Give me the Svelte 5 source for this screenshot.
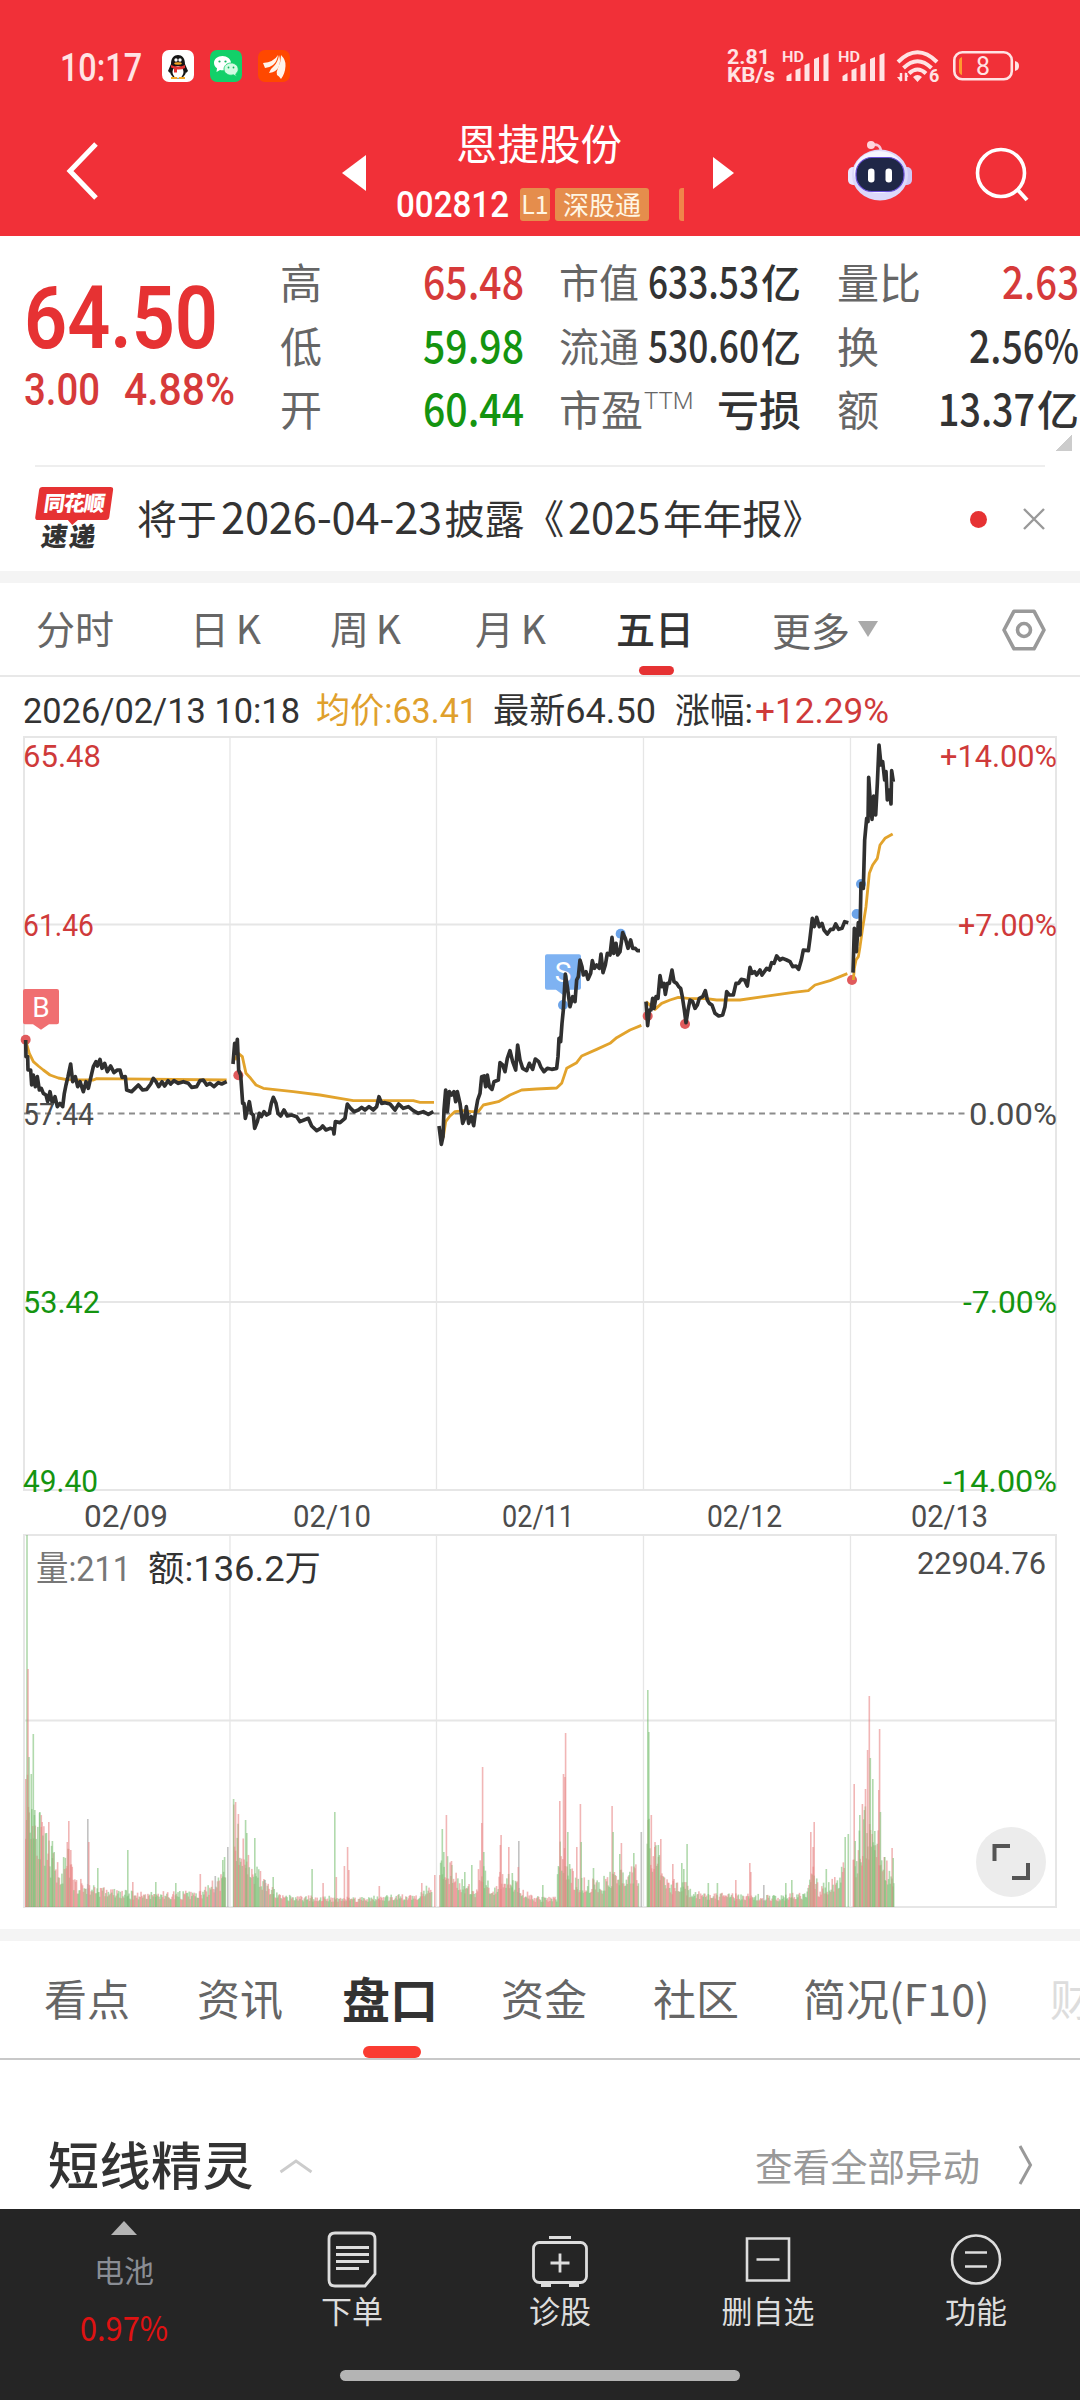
<script>
  const quotes = [
    [
      { label: '高', value: '65.48', w: 101, tone: 'up' },
      { label: '低', value: '59.98', w: 101, tone: 'down' },
      { label: '开', value: '60.44', w: 101, tone: 'down' }
    ],
    [
      { label: '市值', value: '633.53', w: 111, unit: '亿', small: true },
      { label: '流通', value: '530.60', w: 111, unit: '亿', small: true },
      { label: '市盈', sup: 'TTM', unit: '亏损' }
    ],
    [
      { label: '量比', value: '2.63', w: 77, tone: 'up' },
      { label: '换', value: '2.56%', w: 110 },
      { label: '额', value: '13.37', w: 97, unit: '亿' }
    ]
  ];
  const periods = ['分时', '日 K', '周 K', '月 K', '五日'];
  const sections = ['看点', '资讯', '盘口', '资金', '社区', '简况(F10)', '财'];

  // Grid geometry shared by the price and volume panels
  const gridX = [230, 436.5, 643.5, 850.5];
  const dates = [
    ['02/09', 84, 84], ['02/10', 293, 78], ['02/11', 502, 72], ['02/12', 707, 75], ['02/13', 911, 77]
  ];
  const scale = [
    ['65.48', '+14.00%', 767, 78, 117, 'up'],
    ['61.46', '+7.00%', 936, 71, 99, 'up'],
    ['57.44', '0.00%', 1125, 71, 88, 'flat'],
    ['53.42', '-7.00%', 1313, 77, 94, 'down'],
    ['49.40', '-14.00%', 1492, 75, 114, 'down']
  ];

  // Intraday traces: each panel carries its own origin, drawn at three units per pixel
  const traces = [
    {
      x: 0, y: 960,
      avg: ['78,245 88,280 100,305 115,318 130,330 150,345 175,354 200,359 280,360 290,356 680,360',
        '705,300 715,280 727,290 738,340 752,355 768,375 790,385 880,395 960,405 1020,415 1060,422 1240,422 1260,427 1302,427'],
      price: ['77,240 78,290 83,290 84,330 92,330 95,375 100,345 106,380 112,350 118,390 124,385 130,400 138,405 143,425 150,395 157,430 165,410 172,440 180,430 188,440 193,400 198,375 204,350 212,312 218,365 226,350 233,380 240,365 250,395 258,365 265,385 273,350 280,320 288,305 292,318 300,298 306,325 314,310 322,335 332,318 342,338 352,330 360,330 366,352 376,350 380,390 395,395 405,385 415,375 428,390 440,388 452,372 460,355 468,365 476,380 486,365 494,378 504,362 512,372 522,362 535,370 550,365 565,370 575,382 590,380 600,362 610,360 620,375 630,370 642,380 655,368 665,372 680,365',
        '699,312 704,250 708,280 712,238 716,330 722,345 728,430 732,430 736,475 742,450 748,425 754,460 760,465 764,505 772,485 778,460 784,470 792,455 800,465 808,460 814,430 820,412 828,430 834,460 842,468 852,450 862,468 875,465 890,470 900,485 912,480 925,475 935,498 950,512 962,505 968,498 978,510 990,505 1000,508 1002,522 1006,485 1020,488 1035,475 1042,432 1052,445 1062,455 1075,450 1085,442 1095,450 1107,440 1120,450 1130,440 1137,410 1145,430 1155,428 1170,432 1185,450 1196,432 1210,445 1225,440 1240,452 1255,460 1270,455 1285,463 1300,455'],
      dots: [[77, 239, 'r'], [715, 346, 'r']]
    },
    {
      x: 430, y: 880,
      avg: ['27,745 40,770 47,725 60,708 75,695 100,692 125,695 145,695 160,675 205,665 240,645 275,630 320,627 380,624 395,610 410,565 440,548 455,528 500,508 540,490 560,473 600,450 634,436',
        '648,365 675,388 695,370 720,360 745,352 780,356 830,356 860,360 930,360 1000,350 1090,337 1135,332 1155,315 1200,302 1230,290 1252,281'],
      price: ['27,738 34,793 39,770 42,690 47,630 52,695 58,635 65,645 72,635 77,665 82,635 90,670 98,730 104,715 109,680 116,730 124,710 131,737 136,700 143,660 150,640 155,590 162,588 167,620 172,585 178,620 186,628 192,605 205,600 210,548 218,555 225,575 232,535 240,512 248,545 257,570 263,495 270,540 278,565 290,572 298,550 308,568 316,537 326,545 332,560 342,575 352,565 365,568 380,565 384,530 387,475 392,485 396,430 400,390 406,282 412,320 420,380 428,350 435,365 440,300 445,290 450,240 456,260 460,285 468,275 474,298 482,280 487,242 493,265 500,255 508,265 513,222 519,278 526,255 532,220 540,225 546,172 551,220 558,190 563,225 570,215 578,158 586,175 594,205 602,180 608,205 616,205 622,212 630,212',
        '648,365 653,437 658,390 663,390 668,355 672,385 678,350 684,355 690,287 696,320 702,310 706,343 712,310 718,310 726,270 732,305 740,310 746,320 752,325 757,350 763,390 768,428 774,390 780,360 788,365 795,385 802,375 808,355 818,350 826,332 832,360 838,370 846,375 855,400 866,408 878,405 885,380 890,335 898,345 910,345 918,310 926,310 934,298 944,300 952,318 960,262 966,280 974,275 980,285 990,270 996,285 1010,265 1018,270 1025,248 1032,250 1040,228 1050,240 1058,235 1070,240 1080,245 1088,260 1098,258 1106,268 1114,240 1120,210 1135,212 1140,175 1147,115 1153,140 1160,112 1168,140 1176,130 1182,150 1192,162 1202,148 1210,148 1217,132 1226,148 1236,145 1244,125 1255,128'],
      dots: [[399, 375, 'b'], [572, 161, 'b'], [653, 408, 'r'], [765, 432, 'r'], [1266, 300, 'r'], [1280, 102, 'b'], [1293, 12, 'b']]
    },
    {
      x: 780, y: 730,
      avg: ['220,750 223,715 228,690 235,680 240,650 247,600 258,530 263,480 268,430 278,405 292,385 300,345 315,325 338,312'],
      price: ['219,728 223,595 229,665 235,578 240,615 243,460 250,475 254,330 260,265 264,275 266,142 270,200 276,268 281,198 287,255 292,160 297,45 303,105 308,95 314,150 318,125 322,210 328,180 333,222 335,122 340,155'],
      dots: []
    }
  ];

  // Volume: an envelope per session plus single-minute spikes [x, height, colour]
  const sessions = [
    { env: [[25, 110], [33, 92], [45, 55], [60, 32], [68, 45], [74, 22], [105, 15], [130, 12], [200, 12], [215, 22], [225, 28]],
      spikes: [[25, 128, 'r'], [26.2, 372, 'g'], [27.2, 238, 'r'], [28.2, 150, 'g'], [30.5, 133, 'g'], [32.5, 173, 'g'], [34, 97, 'g'], [39, 95, 'g'], [40.5, 80, 'r'], [48, 85, 'r'], [51.6, 66, 'g'], [66.5, 65, 'r'], [68, 86, 'r'], [70, 57, 'r'], [87, 88, 'k'], [88, 65, 'r'], [97, 39, 'g'], [127, 57, 'g'], [132, 25, 'r'], [155, 25, 'g'], [175, 24, 'g'], [199.5, 33, 'r'], [214.5, 31, 'k'], [222, 47, 'g'], [223.8, 50, 'g'], [227, 60, 'k']] },
    { env: [[233, 80], [240, 55], [247, 45], [258, 30], [268, 18], [280, 9], [360, 8], [415, 10], [431, 22]],
      spikes: [[232.8, 108, 'g'], [234.8, 105, 'r'], [237.6, 93, 'r'], [244.8, 87, 'g'], [246, 74, 'g'], [254, 69, 'g'], [264, 27, 'k'], [272.4, 30, 'g'], [311.3, 38, 'g'], [322.3, 24, 'r'], [334, 95, 'g'], [335.5, 30, 'r'], [343.6, 41, 'r'], [346.8, 60, 'r'], [348, 37, 'r'], [378.5, 21, 'r'], [421, 24, 'r'], [434, 32, 'r']] },
    { env: [[439, 45], [450, 34], [462, 22], [474, 12], [480, 40], [490, 14], [503, 32], [510, 24], [525, 12], [535, 8], [556, 8], [558, 55], [568, 40], [575, 22], [590, 22], [600, 20], [612, 30], [638, 32]],
      spikes: [[441.5, 78, 'g'], [443, 55, 'g'], [445.6, 92, 'r'], [450.7, 46, 'r'], [464, 35, 'g'], [471, 42, 'g'], [481, 84, 'r'], [481.8, 140, 'r'], [483, 55, 'g'], [499.6, 62, 'r'], [500.3, 72, 'r'], [508, 60, 'r'], [511.5, 34, 'g'], [518, 66, 'k'], [517.5, 40, 'r'], [542, 22, 'g'], [559, 106, 'r'], [562.7, 133, 'r'], [564.8, 174, 'r'], [564.2, 130, 'r'], [567, 75, 'g'], [576, 60, 'r'], [579.6, 103, 'r'], [580.4, 65, 'g'], [592.7, 39, 'g'], [611.3, 101, 'r'], [612.3, 75, 'g'], [619, 53, 'g'], [620.6, 64, 'r'], [633, 54, 'g'], [640.5, 75, 'k']] },
    { env: [[646.5, 100], [650, 58], [662, 32], [668, 18], [680, 25], [690, 14], [700, 11], [780, 9], [806, 12], [811, 38], [818, 16], [835, 24], [844, 35]],
      spikes: [[647, 217, 'g'], [648, 175, 'g'], [650.5, 92, 'r'], [654, 60, 'r'], [657.5, 62, 'g'], [660, 68, 'r'], [672, 43, 'r'], [681, 44, 'g'], [683, 38, 'g'], [686.3, 63, 'g'], [707.5, 24, 'g'], [716.6, 24, 'g'], [735, 27, 'r'], [749, 44, 'r'], [750, 35, 'r'], [763, 22, 'k'], [785, 24, 'g'], [791, 27, 'g'], [810, 75, 'r'], [812.3, 60, 'r'], [813.4, 85, 'r'], [825.5, 38, 'g'], [844.4, 70, 'g'], [847.5, 73, 'g']] },
    { env: [[852.5, 40], [858, 55], [866, 78], [872, 52], [878, 62], [882, 38], [893, 32]],
      spikes: [[853.4, 123, 'r'], [854.4, 66, 'g'], [859, 92, 'g'], [861.6, 103, 'r'], [864.7, 118, 'r'], [866.8, 157, 'r'], [868.5, 211, 'r'], [869.5, 149, 'g'], [872, 128, 'g'], [874, 76, 'g'], [878, 117, 'r'], [878.8, 178, 'r'], [879.6, 95, 'g'], [884, 50, 'g'], [891.3, 59, 'r'], [892.4, 49, 'g']] }
  ];
  let seed = 11;
  const rand = () => (seed = (seed * 16807) % 2147483647) / 2147483647;
  function volumeBars() {
    const bars = [];
    for (const { env, spikes } of sessions) {
      const end = env[env.length - 1][0];
      let i = 0;
      for (let x = env[0][0]; x <= end; x += 0.86) {
        while (i < env.length - 2 && x > env[i + 1][0]) i++;
        const [[x0, h0], [x1, h1]] = [env[i], env[i + 1]];
        const h = (h0 + ((h1 - h0) * (x - x0)) / (x1 - x0)) * (0.62 + 0.75 * rand() ** 1.2);
        bars.push([x, h, rand() < 0.5 ? 'r' : 'g']);
      }
      bars.push(...spikes);
    }
    return bars;
  }
  const bars = volumeBars();
</script>

{#snippet num(text, w, size, weight = 500)}
  <svg class="num" width={w} height={size * 0.711} aria-label={text}>
    <text x="0" y={size * 0.711} font-size={size} font-weight={weight} textLength={w} lengthAdjust="spacingAndGlyphs">{text}</text>
  </svg>
{/snippet}

{#snippet signal()}
  <svg class="signal" width="48" height="34" viewBox="0 0 48 34">
    <text x="0" y="14" font-size="15" font-weight="600" textLength="22" lengthAdjust="spacingAndGlyphs">HD</text>
    <path d="M4.500 33v-5l5-3v8zM13.500 33V22l5-2v13zM22.500 33V17l5-2v18zM32 33V11l5-2v24zM41.500 33V7l5-2v28z" />
  </svg>
{/snippet}

<div class="app">
  <header>
    <div class="status">
      <div class="time">{@render num('10:17', 82, 39, 500)}</div>
      <svg class="apps" width="128" height="32" viewBox="0 0 128 32">
        <rect width="32" height="32" rx="7" fill="#fff" />
        <path d="M9 14c0-6 3-9 7-9s7 3 7 9l3 7-2 2-3-4H11l-3 4-2-2z" fill="#151515" />
        <ellipse cx="16" cy="21.500" rx="8" ry="7" fill="#151515" />
        <ellipse cx="16" cy="22" rx="5.500" ry="6" fill="#fff" />
        <path d="M9 15q7 3 14 0v3q-4 2-8 1.500v3h-3v-4l-3-1z" fill="#e23232" />
        <circle cx="14" cy="10" r="1.700" fill="#fff" /><circle cx="18" cy="10" r="1.700" fill="#fff" />
        <ellipse cx="16" cy="13.500" rx="3.800" ry="1.200" fill="#f5a623" />
        <path d="M9 28h6M17 28h6" stroke="#f5a623" stroke-width="2" />
        <rect x="48" width="32" height="32" rx="7" fill="#12d069" />
        <path d="M60.500 6c-5 0-8.500 3-8.500 7 0 2.300 1.200 4 3 5.300L54.500 22l3.500-2c4 1 11-.5 11-7 0-4-4-7-8.500-7z" fill="#fff" />
        <path d="M69 13c-4 0-7 2.700-7 6s3 6.200 7 6.200l2.500-.4 3 1.700-.8-2.600c1.500-1 2.500-2.800 2.500-4.700 0-3.500-3.200-6.200-7.200-6.200z" fill="#d4fbe3" stroke="#12d069" stroke-width=".8" />
        <g fill="#12b35b"><circle cx="57.500" cy="11.500" r="1.100" /><circle cx="63.500" cy="11.500" r="1.100" /><circle cx="66.500" cy="17.500" r=".9" /><circle cx="71.500" cy="17.500" r=".9" /></g>
        <rect x="96" width="32" height="32" rx="7" fill="#ff4800" />
        <g fill="#fff4ea">
          <path d="M101 13q11-1 15-8-1 7-5 10-4 3-8 3z" />
          <path d="M107 23q1-4 5-7 4-4 5-11 2 6 0 11-2 6-10 7z" />
          <path d="M115 25q-1-3 1-7 3-6 3-13 5 5 4.500 11-.5 8-4.500 13-2-3-4-4z" />
        </g>
      </svg>
      <svg class="speed" width="49" height="35" viewBox="0 0 49 35">
        <text x="0" y="16" font-size="21" font-weight="700" textLength="43" lengthAdjust="spacingAndGlyphs">2.81</text>
        <text x="0" y="34" font-size="20" font-weight="700" textLength="48" lengthAdjust="spacingAndGlyphs">KB/s</text>
      </svg>
      {@render signal()}
      {@render signal()}
      <svg class="wifi" width="44" height="34" viewBox="0 0 44 34">
        <g fill="none" stroke="#ffe3e4" stroke-width="4">
          <path d="M2 13Q21.500-6.500 41 13M7.500 19Q21.500 5.500 35.500 19M13 24.500Q21.500 16.500 30 24.500" />
          <path d="M5 24v8M10 24v8" stroke-width="2.500" />
        </g>
        <path d="M17 28q4.500-4 9 0l-4.500 5zM1 28h4v5zM12.500 28h-3v-5z" />
        <text x="33" y="33" font-size="18" font-weight="700">6</text>
      </svg>
      <svg class="battery" width="67" height="30" viewBox="0 0 67 30">
        <rect x="1.300" y="1.300" width="57.500" height="27" rx="8" fill="none" stroke="#ffe3e4" stroke-width="2.600" />
        <path d="M9 6v18q-3-1-3-4V10q0-3 3-4z" fill="#ff9a2e" />
        <text x="23" y="23.500" font-size="25" textLength="14" lengthAdjust="spacingAndGlyphs">8</text>
        <path d="M62 10q4 1 4 5t-4 5z" />
      </svg>
    </div>
    <div class="titlebar">
      <svg class="back" width="34" height="60" viewBox="0 0 34 60"><path d="M30 3L4 30l26 27" fill="none" stroke="#fff" stroke-width="5" /></svg>
      <svg class="prev" width="24" height="36" viewBox="0 0 24 36"><path d="M24 0v36L0 18z" fill="#fff" /></svg>
      <div class="stock">
        <div class="name">恩捷股份</div>
        <div class="code">
          {@render num('002812', 113, 37)}
          <span class="tag l1">L1</span>
          <span class="tag">深股通</span>
          <i class="cut"></i>
        </div>
      </div>
      <svg class="next" width="21" height="32" viewBox="0 0 21 32"><path d="M0 0v32l21-16z" fill="#fff" /></svg>
      <svg class="robot" width="64" height="62" viewBox="0 0 64 62">
        <path d="M23 6q10-2 10 7" fill="none" stroke="#f9c7d8" stroke-width="2.600" />
        <circle cx="23" cy="6" r="4" fill="#ffd5dc" />
        <rect x="0" y="28" width="12" height="18" rx="5" fill="#e9e6ff" /><rect x="52" y="28" width="12" height="18" rx="5" fill="#cfc8f5" />
        <ellipse cx="32" cy="36" rx="28" ry="25.500" fill="#dcd8fa" />
        <ellipse cx="31" cy="33" rx="25" ry="21" fill="#f6f5ff" />
        <rect x="8" y="18.500" width="48" height="34" rx="16" fill="#1f2747" stroke="#6a50d8" stroke-width="1.200" />
        <rect x="20" y="29.500" width="6.500" height="14" rx="3.200" fill="#fff" /><rect x="37.500" y="29.500" width="6.500" height="14" rx="3.200" fill="#fff" />
      </svg>
      <svg class="search" width="54" height="56" viewBox="0 0 54 56"><g fill="none" stroke="#fff" stroke-width="3.600"><circle cx="26" cy="27" r="23.500" /><path d="M42 43l10 11" stroke-width="4" /></g></svg>
    </div>
  </header>

  <section class="quote">
    <div class="price">
      {@render num('64.50', 194, 88, 600)}
      <div class="change">{@render num('3.00', 76, 44)}{@render num('4.88%', 111, 44)}</div>
    </div>
    {#each quotes as column}
      <dl>
        {#each column as q}
          <div class="row">
            <dt class:small={q.small}>{q.label}{#if q.sup}<sup>{q.sup}</sup>{/if}</dt>
            <dd class={q.tone} class:small={q.small}>
              {#if q.value}{@render num(q.value, q.w, q.small ? 43 : 45)}{/if}
              {#if q.unit}<span>{q.unit}</span>{/if}
            </dd>
          </div>
        {/each}
      </dl>
    {/each}
    <i class="corner"></i>
  </section>

  <section class="notice">
    <div class="brand"><b>同花顺</b><em>速递</em></div>
    <p>将于{@render num('2026-04-23', 221, 43, 400)}披露《{@render num('2025', 92, 43, 400)}年年报》</p>
    <i class="dot"></i>
    <svg width="22" height="22" viewBox="0 0 22 22"><path d="M1 1l20 20M21 1L1 21" stroke="#999" stroke-width="2.400" /></svg>
  </section>

  <div class="strip"></div>

  <nav class="periods">
    {#each periods as p, i}
      <span class:active={i === 4}>{p}</span>
    {/each}
    <span class="more">更多<i></i></span>
    <svg width="44" height="42" viewBox="0 0 44 42"><path d="M12 2.200h20L42 21 32 39.800H12L2 21z" fill="none" stroke="#999" stroke-width="3.600" stroke-linejoin="round" /><circle cx="22" cy="21" r="6.500" fill="none" stroke="#999" stroke-width="3.600" /></svg>
  </nav>

  <svg class="chart" width="1080" height="1252" viewBox="0 677 1080 1252">
    <g class="info">
      <text x="23" y="723" textLength="277" lengthAdjust="spacingAndGlyphs">2026/02/13 10:18</text>
      <text x="316" y="723" class="gold" textLength="162" lengthAdjust="spacingAndGlyphs">均价:63.41</text>
      <text x="493" y="723" textLength="163" lengthAdjust="spacingAndGlyphs">最新64.50</text>
      <text x="675" y="723" textLength="78" lengthAdjust="spacingAndGlyphs">涨幅:</text>
      <text x="755" y="723" class="up" textLength="134" lengthAdjust="spacingAndGlyphs">+12.29%</text>
    </g>
    <g class="grid">
      <path d="M24 737H1056V1490H24zM24 924.500H1056M24 1302H1056M24 1535H1056V1907H24zM24 1720.500H1056" />
      {#each gridX as x}<path d="M{x} 737V1490M{x} 1535V1907" stroke-width="1.300" />{/each}
    </g>
    <path d="M24 1113.500H966" stroke="#8c8c8c" stroke-width="1.800" stroke-dasharray="6 4.500" />

    {#each traces as t}
      <g transform="translate({t.x} {t.y}) scale(0.33333)">
        {#if t.x === 430}
          <path d="M351 223h96q6 0 6 6v94q0 6-6 6h-27l-21 16-21-16h-27q-6 0-6-6v-94q0-6 6-6z" fill="#7eb2f2" />
          <text x="399" y="306" class="mark">S</text>
        {:else if t.x === 0}
          <path d="M75 87h96q6 0 6 6v94q0 6-6 6h-24l-24 16-24-16H75q-6 0-6-6V93q0-6 6-6z" fill="#f06f71" />
          <text x="123" y="171" class="mark">B</text>
        {/if}
        {#each t.dots as [x, y, c]}<circle cx={x} cy={y} r="15" fill={c === 'r' ? '#e05a5c' : '#6ba3e8'} />{/each}
        {#each t.avg as points}<polyline {points} stroke="#e2a32c" stroke-width="8.500" />{/each}
        {#each t.price as points}<polyline {points} stroke="#303030" stroke-width="11" />{/each}
      </g>
    {/each}

    <g class="axis">
      {#each scale as [price, pct, y, w, pw, tone]}
        <text x="23" {y} class={tone} textLength={w} lengthAdjust="spacingAndGlyphs">{price}</text>
        <text x={1057 - pw} {y} class={tone} textLength={pw} lengthAdjust="spacingAndGlyphs">{pct}</text>
      {/each}
      {#each dates as [d, x, w]}
        <text {x} y="1527" class="flat" font-size="32" textLength={w} lengthAdjust="spacingAndGlyphs">{d}</text>
      {/each}
      <text x="917" y="1574" class="flat" textLength="129" lengthAdjust="spacingAndGlyphs">22904.76</text>
    </g>

    <g class="volume">
      {#each bars as [x, h, c]}<rect {x} y={1907 - h} width="1.600" height={h} class={c} />{/each}
    </g>
    <g class="info">
      <text x="36" y="1581" class="muted" textLength="95" lengthAdjust="spacingAndGlyphs">量:211</text>
      <text x="148" y="1581" textLength="173" lengthAdjust="spacingAndGlyphs">额:136.2万</text>
    </g>
    <circle cx="1011" cy="1862" r="35" fill="#ececec" />
    <path d="M994.500 1861v-15H1010M1012 1878h16v-15" fill="none" stroke="#555" stroke-width="4" />
  </svg>

  <div class="strip"></div>

  <nav class="sections">
    {#each sections as s, i}
      <span class:active={i === 2} class:faded={i === 6}>{s}</span>
    {/each}
  </nav>

  <section class="panel">
    <h2>短线精灵</h2>
    <svg class="fold" width="34" height="14" viewBox="0 0 34 14"><path d="M1.500 13L17 2l15.500 11" fill="none" stroke="#ccc" stroke-width="2.800" /></svg>
    <a href="#all">查看全部异动</a>
    <svg width="15" height="40" viewBox="0 0 15 40"><path d="M2 1l10.500 19L2 39" fill="none" stroke="#999" stroke-width="3" /></svg>
  </section>

  <footer>
    <div class="tabs">
      <div class="index">
        <i></i>
        <span>电池</span>
        {@render num('0.97%', 88, 34, 400)}
      </div>
      <div class="tab">
        <svg width="60" height="60" viewBox="0 0 60 60"><g fill="none" stroke="#ddd" stroke-width="2.800"><path d="M13 4h34q6 0 6 6v35L43 57H13q-6 0-6-6V10q0-6 6-6z" /><path d="M14 18.500h33M14 25.500h33M14 32.500h33M14 39.500h23" /></g></svg>
        <span>下单</span>
      </div>
      <div class="tab">
        <svg width="60" height="60" viewBox="0 0 60 60"><g fill="none" stroke="#ddd" stroke-width="2.800"><rect x="3.500" y="13.500" width="53" height="40" rx="6" /><path d="M19 8.500h22M20.500 34h19M30 24.500v19" /><path d="M11 56h10M39 56h10" stroke-width="4" /></g></svg>
        <span>诊股</span>
      </div>
      <div class="tab">
        <svg width="60" height="60" viewBox="0 0 60 60"><path d="M9 9.500h42v42H9zM18.500 30.500h23" fill="none" stroke="#ddd" stroke-width="2.600" /></svg>
        <span>删自选</span>
      </div>
      <div class="tab">
        <svg width="60" height="60" viewBox="0 0 60 60"><g fill="none" stroke="#ddd" stroke-width="2.600"><circle cx="30" cy="30.500" r="24" /><path d="M19 23.500h22M19 37.500h22" /></g></svg>
        <span>功能</span>
      </div>
    </div>
    <i class="home"></i>
  </footer>
</div>

<style>
  :global(body) { margin: 0; background: #fff; }
  .app {
    width: 1080px; height: 2400px; overflow: hidden; display: flex; flex-direction: column;
    background: #fff; color: #333; font-family: Roboto, "Noto Sans CJK SC", sans-serif;
  }
  .app > * { flex: none; box-sizing: border-box; }
  svg { display: block; flex: none; overflow: visible; }
  .num { fill: currentColor; }
  i { display: block; flex: none; }

  header { height: 236px; background: #f13038; color: #fff; }
  .status { height: 116px; padding: 49px 0 0 60px; box-sizing: border-box; display: flex; align-items: flex-start; fill: #ffe3e4; color: #ffe3e4; }
  .time { padding-top: 4px; }
  .apps { margin: 1px 437px 0 20px; }
  .speed { margin: -1px 6px 0 0; }
  .signal { margin: -1px 8px 0 0; }
  .wifi { margin-left: 2px; }
  .battery { margin: 2px 0 0 13px; }
  .titlebar { height: 120px; display: flex; align-items: flex-start; }
  .back { margin: 25px 0 0 66px; }
  .prev { margin: 39px 0 0 242px; }
  .stock { margin-left: 30px; width: 289px; }
  .name { width: 226px; text-align: center; font: 400 41.500px/52px "Noto Sans CJK SC", sans-serif; margin: 0 0 0 30px; white-space: nowrap; }
  .code { display: flex; align-items: center; height: 32px; margin-top: 20px; }
  .tag { box-sizing: border-box; height: 33px; width: 94px; margin-left: 5px; text-align: center; background: #e58d4c; color: #fff6e4; border-radius: 3px; font: 26px/31px "Noto Sans CJK SC", sans-serif; }
  .l1 { width: 30px; margin-left: 11px; font-size: 25px; }
  .cut { width: 5px; height: 33px; margin-left: 30px; background: #f0854a; border-radius: 3px 0 0 3px; }
  .next { margin: 41px 0 0 28px; }
  .robot { margin: 23px 0 0 114px; }
  .search { margin: 30px 0 0 63px; }

  .quote { height: 229px; padding: 15px 0 0 26px; display: flex; align-items: flex-start; position: relative; }
  .price { width: 254px; padding-top: 34px; margin-left: -2px; margin-right: 2px; box-sizing: border-box; color: #e63233; }
  .change { display: flex; gap: 24px; margin: 26px 0 0; color: #d63a3a; }
  dl { margin: 0; width: 244px; }
  dl:nth-of-type(2) { margin-left: 35px; width: 242px; }
  dl:nth-of-type(3) { margin-left: 36px; width: 242px; }
  .row { height: 63.6px; display: flex; justify-content: space-between; font: 42px/60px "Noto Sans CJK SC", sans-serif; white-space: nowrap; }
  dt { color: #666; font-weight: 400; display: flex; }
  dt.small { font-size: 40px; }
  sup { font: 300 24px/46px Roboto, sans-serif; margin-left: 1px; }
  dd { margin: 0; display: flex; gap: 2px; font-weight: 500; }
  dd :global(.num) { margin-top: 16px; }
  dd.small { font-size: 40px; }
  .up { color: #d63a3a; fill: #cf3a3a; }
  .down { color: #149410; fill: #149410; }
  .corner { position: absolute; right: 8px; bottom: 14px; width: 16px; height: 16px; background: linear-gradient(135deg, transparent 50%, #ccc 50%); }

  .notice { height: 106px; margin: 0 35px; border-top: 2px solid #eee; display: flex; align-items: center; }
  .brand { width: 78px; height: 64px; margin-left: 1px; position: relative; left: -3px; display: flex; flex-direction: column; align-items: center; transform: skewX(-8deg); }
  .brand b { width: 74px; height: 33px; background: #e63233; border-radius: 3px; color: #fff; font: 900 21px/31px "Noto Sans CJK SC", sans-serif; text-align: center; letter-spacing: -1px; }
  .brand em { font: 900 26px/30px "Noto Sans CJK SC", sans-serif; letter-spacing: 2px; color: #333; }
  .brand::after { content: ""; position: absolute; left: 35px; top: 33px; border: 5px solid transparent; border-top-color: #e63233; }
  .notice p { margin: -4px auto 0 23px; display: flex; align-items: center; font: 40px/60px "Noto Sans CJK SC", sans-serif; font-weight: 400; white-space: nowrap; letter-spacing: -0.2px; }
  .notice p :global(.num) { margin: 2px 3px 0 4px; }
  .dot { width: 17px; height: 17px; border-radius: 50%; background: #e63233; margin-right: 36px; }

  .strip { height: 12px; background: #f4f4f4; }

  .periods { height: 94px; border-bottom: 2px solid #e8e8e8; padding-left: 36px; display: grid; grid-template-columns: 154px 140px 145px 141px 156px 230px 1fr; font: 39px/88px "Noto Sans CJK SC", sans-serif; font-weight: 400; color: #666; word-spacing: -2px; }
  .periods span { position: relative; white-space: nowrap; }
  .periods svg { align-self: center; margin-top: 2px; }
  .periods .active { color: #333; font-weight: 500; }
  .periods .active::after { content: ""; position: absolute; left: 23px; bottom: 0; width: 35px; height: 9px; border-radius: 5px; background: #e63233; }
  .more { display: flex; align-items: center; gap: 8px; }
  .more i { border: 10px solid transparent; border-top: 16px solid #aaa; border-bottom: 0; }

  .chart { font-family: Roboto, "Noto Sans CJK SC", sans-serif; }
  .info { font-size: 35px; fill: #333; }
  .gold { fill: #dfa02c; }
  .muted { fill: #777; }
  .grid { fill: none; stroke: #e6e6e6; stroke-width: 2; }
  .axis { font-size: 31px; }
  .flat { fill: #4c4c4c; }
  .mark { font-size: 84px; fill: #fff; text-anchor: middle; }
  polyline { fill: none; stroke-linejoin: round; }
  .volume { opacity: .82; }
  .volume .r { fill: #e56c6c; fill-opacity: .6; }
  .volume .g { fill: #62b45a; fill-opacity: .6; }
  .volume .k { fill: #999; fill-opacity: .7; }

  .sections { height: 119px; border-bottom: 2px solid #c8c8c8; padding-left: 44px; display: grid; grid-template-columns: 153px 148px 156px 152px 150px 247px 1fr; font: 43px/112px "Noto Sans CJK SC", sans-serif; font-weight: 400; color: #666; overflow: hidden; }
  .sections span { position: relative; white-space: nowrap; }
  .sections .active { margin-left: -3px; font-size: 48px; font-weight: 700; color: #333; }
  .sections .active::after { content: ""; position: absolute; left: 21px; bottom: 0; width: 58px; height: 12px; border-radius: 6px; background: #fa3c32; }
  .sections .faded { color: #ddd; }

  .panel { height: 149px; padding: 61px 47px 0 48px; display: flex; align-items: center; }
  h2 { margin: 0; font: 500 51px/80px "Noto Sans CJK SC", sans-serif; letter-spacing: 0.5px; position: relative; top: -2px; }
  .fold { margin: 2px auto 0 25px; }
  .panel a { font: 400 37.500px/80px "Noto Sans CJK SC", sans-serif; color: #999; text-decoration: none; margin-right: 38px; }

  footer { height: 191px; background: #252525; display: flex; flex-direction: column; align-items: center; }
  .tabs { display: grid; grid-template-columns: 248px repeat(4, 208px); height: 161px; }
  .index, .tab { display: flex; flex-direction: column; align-items: center; font: 31px/40px "Noto Sans CJK SC", sans-serif; }
  .index { color: #8a8d94; }
  .index i { margin-top: 12px; border: 13px solid transparent; border-top: 0; border-bottom: 14px solid #b4b4b4; }
  .index span { margin-top: 14px; font-size: 30px; }
  .index :global(.num) { margin-top: 28px; fill: #e01212; }
  .tab { color: #ddd; padding-top: 20px; }
  .tab span { margin-top: 1px; }
  .home { width: 400px; height: 11px; border-radius: 6px; background: #b4b4b4; }
</style>
